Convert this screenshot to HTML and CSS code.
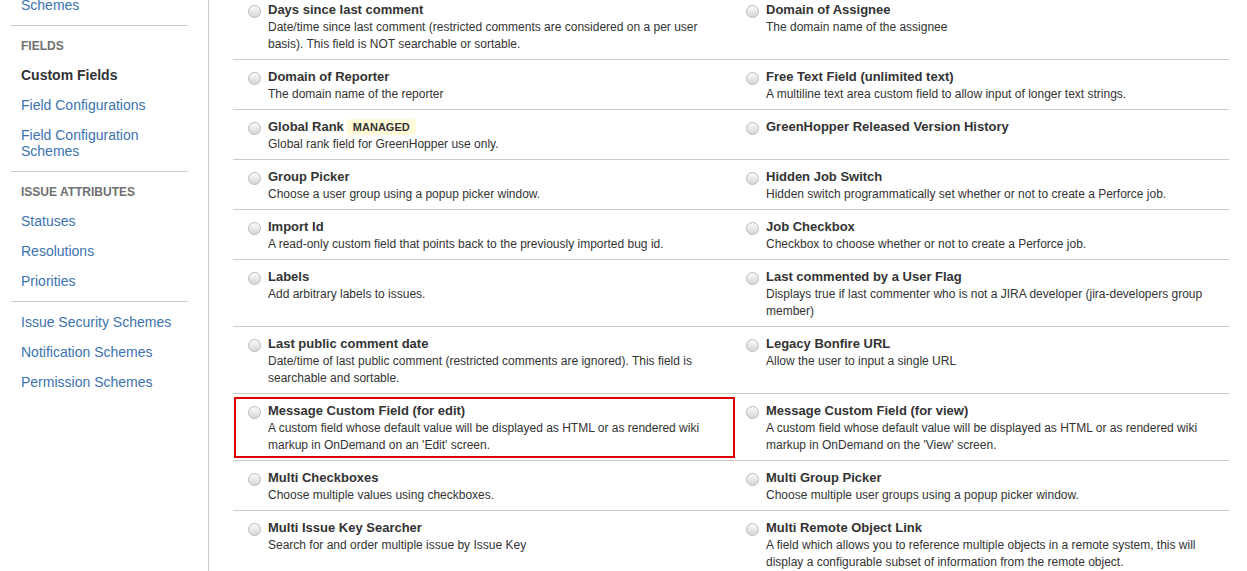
FILE: index.html
```html
<!DOCTYPE html>
<html>
<head>
  <title>Custom Fields - Add Field</title>
  <link rel="stylesheet" href="styles.css">
</head>
<body>
  <div class="page">
    <!-- Admin sidebar -->
    <div class="sidebar">
      <div class="nav">
        <div class="nav-group">
          <a class="nav-item">Issue Type Screen Schemes</a>
        </div>
        <div class="nav-group">
          <div class="nav-heading">Fields</div>
          <a class="nav-item active">Custom Fields</a>
          <a class="nav-item">Field Configurations</a>
          <a class="nav-item">Field Configuration Schemes</a>
        </div>
        <div class="nav-group">
          <div class="nav-heading">Issue Attributes</div>
          <a class="nav-item">Statuses</a>
          <a class="nav-item">Resolutions</a>
          <a class="nav-item">Priorities</a>
        </div>
        <div class="nav-group last">
          <a class="nav-item">Issue Security Schemes</a>
          <a class="nav-item">Notification Schemes</a>
          <a class="nav-item">Permission Schemes</a>
        </div>
      </div>
    </div>

    <!-- Field type list -->
    <div class="main">
      <div class="field-list">
        <div class="field">
          <span class="radio"></span>
          <div class="field-text">
            <div class="field-name">Days since last comment</div>
            <div class="field-desc">Date/time since last comment (restricted comments are considered on a per user basis). This field is NOT searchable or sortable.</div>
          </div>
        </div>
        <div class="field">
          <span class="radio"></span>
          <div class="field-text">
            <div class="field-name">Domain of Assignee</div>
            <div class="field-desc">The domain name of the assignee</div>
          </div>
        </div>

        <div class="field">
          <span class="radio"></span>
          <div class="field-text">
            <div class="field-name">Domain of Reporter</div>
            <div class="field-desc">The domain name of the reporter</div>
          </div>
        </div>
        <div class="field">
          <span class="radio"></span>
          <div class="field-text">
            <div class="field-name">Free Text Field (unlimited text)</div>
            <div class="field-desc">A multiline text area custom field to allow input of longer text strings.</div>
          </div>
        </div>

        <div class="field">
          <span class="radio"></span>
          <div class="field-text">
            <div class="field-name">Global Rank<span class="lozenge">Managed</span></div>
            <div class="field-desc">Global rank field for GreenHopper use only.</div>
          </div>
        </div>
        <div class="field">
          <span class="radio"></span>
          <div class="field-text">
            <div class="field-name">GreenHopper Released Version History</div>
          </div>
        </div>

        <div class="field">
          <span class="radio"></span>
          <div class="field-text">
            <div class="field-name">Group Picker</div>
            <div class="field-desc">Choose a user group using a popup picker window.</div>
          </div>
        </div>
        <div class="field">
          <span class="radio"></span>
          <div class="field-text">
            <div class="field-name">Hidden Job Switch</div>
            <div class="field-desc">Hidden switch programmatically set whether or not to create a Perforce job.</div>
          </div>
        </div>

        <div class="field">
          <span class="radio"></span>
          <div class="field-text">
            <div class="field-name">Import Id</div>
            <div class="field-desc">A read-only custom field that points back to the previously imported bug id.</div>
          </div>
        </div>
        <div class="field">
          <span class="radio"></span>
          <div class="field-text">
            <div class="field-name">Job Checkbox</div>
            <div class="field-desc">Checkbox to choose whether or not to create a Perforce job.</div>
          </div>
        </div>

        <div class="field">
          <span class="radio"></span>
          <div class="field-text">
            <div class="field-name">Labels</div>
            <div class="field-desc">Add arbitrary labels to issues.</div>
          </div>
        </div>
        <div class="field">
          <span class="radio"></span>
          <div class="field-text">
            <div class="field-name">Last commented by a User Flag</div>
            <div class="field-desc">Displays true if last commenter who is not a JIRA developer (jira-developers group member)</div>
          </div>
        </div>

        <div class="field">
          <span class="radio"></span>
          <div class="field-text">
            <div class="field-name">Last public comment date</div>
            <div class="field-desc">Date/time of last public comment (restricted comments are ignored). This field is searchable and sortable.</div>
          </div>
        </div>
        <div class="field">
          <span class="radio"></span>
          <div class="field-text">
            <div class="field-name">Legacy Bonfire URL</div>
            <div class="field-desc">Allow the user to input a single URL</div>
          </div>
        </div>

        <div class="field highlighted">
          <span class="radio"></span>
          <div class="field-text">
            <div class="field-name">Message Custom Field (for edit)</div>
            <div class="field-desc">A custom field whose default value will be displayed as HTML or as rendered wiki markup in OnDemand on an 'Edit' screen.</div>
          </div>
        </div>
        <div class="field">
          <span class="radio"></span>
          <div class="field-text">
            <div class="field-name">Message Custom Field (for view)</div>
            <div class="field-desc">A custom field whose default value will be displayed as HTML or as rendered wiki markup in OnDemand on the 'View' screen.</div>
          </div>
        </div>

        <div class="field">
          <span class="radio"></span>
          <div class="field-text">
            <div class="field-name">Multi Checkboxes</div>
            <div class="field-desc">Choose multiple values using checkboxes.</div>
          </div>
        </div>
        <div class="field">
          <span class="radio"></span>
          <div class="field-text">
            <div class="field-name">Multi Group Picker</div>
            <div class="field-desc">Choose multiple user groups using a popup picker window.</div>
          </div>
        </div>

        <div class="field">
          <span class="radio"></span>
          <div class="field-text">
            <div class="field-name">Multi Issue Key Searcher</div>
            <div class="field-desc">Search for and order multiple issue by Issue Key</div>
          </div>
        </div>
        <div class="field">
          <span class="radio"></span>
          <div class="field-text">
            <div class="field-name">Multi Remote Object Link</div>
            <div class="field-desc">A field which allows you to reference multiple objects in a remote system, this will display a configurable subset of information from the remote object.</div>
          </div>
        </div>
      </div>
    </div>
  </div>
</body>
</html>
```

FILE: styles.css
```css
body {
  font-family: "Liberation Sans", Arial, sans-serif;
  margin: 0;
  padding: 0;
  color: #333333;
  background-color: #ffffff;
  overflow: hidden;
}
.page {
  display: flex;
  height: 100vh;
}

/* Sidebar */
.sidebar {
  width: 209px;
  flex-shrink: 0;
  border-right: 1px solid #cccccc;
  padding: 0 20px 0 11px;
  box-sizing: border-box;
}
.nav {
  margin-top: -31px; /* page is scrolled down a little */
}
.nav-group {
  padding: 5px 0;
  border-bottom: 1px solid #cccccc;
}
.nav-group.last {
  border-bottom: none;
}
.nav-heading {
  padding: 7px 10px 6px;
  font-size: 12px;
  line-height: 16px;
  font-weight: bold;
  text-transform: uppercase;
  color: #707070;
}
.nav-item {
  display: block;
  padding: 7px 10px;
  font-size: 14px;
  line-height: 16px;
  color: #3b73af;
  cursor: pointer;
}
.nav-item.active {
  color: #333333;
  font-weight: bold;
}

/* Field types */
.main {
  flex: 1;
  padding: 0 18px 0 24px;
}
.field-list {
  display: grid;
  grid-template-columns: 1fr 1fr;
  margin-top: -7px;
}
.field {
  position: relative;
  display: flex;
  align-items: flex-start;
  gap: 7px;
  padding: 8px 10px 6px 15px;
  border-bottom: 1px solid #cccccc;
}
.radio {
  flex-shrink: 0;
  width: 11px;
  height: 11px;
  margin-top: 4px;
  border: 1px solid #b9b9b9;
  border-radius: 50%;
  background: linear-gradient(#fbfbfb, #d6d6d6);
}
.field-name {
  font-size: 13px;
  line-height: 18px;
  font-weight: bold;
  color: #333333;
}
.field-desc {
  font-size: 12px;
  line-height: 17px;
  color: #333333;
}
.lozenge {
  display: inline-block;
  margin-left: 3px;
  margin-top: 1px;
  padding: 0 6px;
  font-size: 11px;
  line-height: 16px;
  font-weight: bold;
  text-transform: uppercase;
  background-color: #fffbd8;
  border-radius: 3px;
  vertical-align: top;
}
.field.highlighted::after {
  content: "";
  position: absolute;
  top: 3px;
  bottom: 2px;
  left: 1px;
  right: -4px;
  border: 2px solid #e00000;
}
```
